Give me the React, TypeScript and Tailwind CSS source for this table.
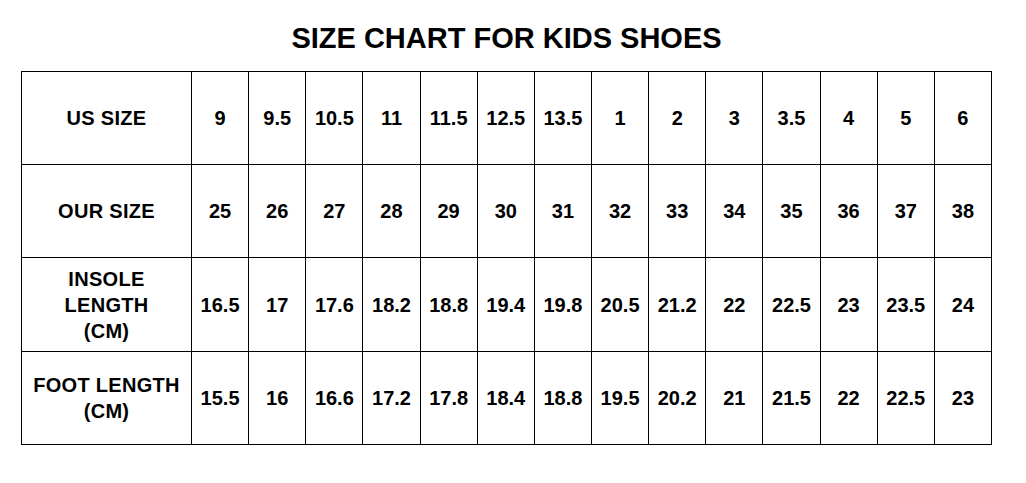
import React from 'react';

type Row = { label: string[]; height: string; values: string[] };

const rows: Row[] = [
  {
    label: ['US SIZE'],
    height: 'h-[93px]',
    values: ['9', '9.5', '10.5', '11', '11.5', '12.5', '13.5', '1', '2', '3', '3.5', '4', '5', '6'],
  },
  {
    label: ['OUR SIZE'],
    height: 'h-[93px]',
    values: ['25', '26', '27', '28', '29', '30', '31', '32', '33', '34', '35', '36', '37', '38'],
  },
  {
    label: ['INSOLE', 'LENGTH', '(CM)'],
    height: 'h-[94px]',
    values: ['16.5', '17', '17.6', '18.2', '18.8', '19.4', '19.8', '20.5', '21.2', '22', '22.5', '23', '23.5', '24'],
  },
  {
    label: ['FOOT LENGTH', '(CM)'],
    height: 'h-[93px]',
    values: ['15.5', '16', '16.6', '17.2', '17.8', '18.4', '18.8', '19.5', '20.2', '21', '21.5', '22', '22.5', '23'],
  },
];

export default function App() {
  return (
    <div className="w-[1026px] h-[483px] bg-white text-black font-['Liberation_Sans',Arial,sans-serif] font-bold pt-[24px]">
      <h1 className="ml-[21px] w-[971px] text-center text-[29px] leading-[29px] font-bold">
        SIZE CHART FOR KIDS SHOES
      </h1>

      <div className="ml-[21px] mt-[18px] w-[971px] grid grid-cols-[170px_repeat(14,minmax(0,1fr))] border-l border-t border-black">
        {rows.map((row) => (
          <React.Fragment key={row.label.join(' ')}>
            <div
              className={`${row.height} border-r border-b border-black flex flex-col items-center justify-center text-[20px] leading-[26px] tracking-[0.3px]`}
            >
              {row.label.map((line) => (
                <span key={line}>{line}</span>
              ))}
            </div>
            {row.values.map((v, i) => (
              <div
                key={i}
                className={`${row.height} border-r border-b border-black flex items-center justify-center text-[20px]`}
              >
                {v}
              </div>
            ))}
          </React.Fragment>
        ))}
      </div>
    </div>
  );
}
